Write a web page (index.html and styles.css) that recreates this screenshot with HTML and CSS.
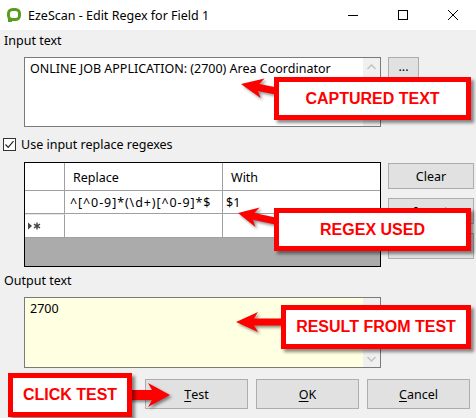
FILE: index.html
```html
<!DOCTYPE html>
<html>
<head>
<meta charset="utf-8">
<link rel="stylesheet" href="styles.css">
</head>
<body>
<div class="window">
  <div class="titlebar">
    <svg class="logo" width="14" height="15" viewBox="0 0 14 15">
      <rect x="1.5" y="1.5" width="11" height="10" rx="4" ry="4" fill="none" stroke="#5a9c1e" stroke-width="3"/>
      <rect x="1" y="10" width="4" height="4" fill="#5a9c1e"/>
    </svg>
    <span class="title">EzeScan - Edit Regex for Field 1</span>
    <div class="controls">
      <svg width="10" height="10" viewBox="0 0 10 10"><line x1="0" y1="5.5" x2="10" y2="5.5" stroke="#000" stroke-width="1"/></svg>
      <svg width="10" height="10" viewBox="0 0 10 10"><rect x="0.5" y="0.5" width="9" height="9" fill="none" stroke="#000" stroke-width="1"/></svg>
      <svg width="10" height="10" viewBox="0 0 10 10"><path d="M0 0 L10 10 M10 0 L0 10" stroke="#000" stroke-width="1"/></svg>
    </div>
  </div>

  <div class="form">
    <div class="label lbl-input">Input text</div>
    <div class="row row-input">
      <div class="textbox input-box">
        <div class="txt">ONLINE JOB APPLICATION: (2700) Area Coordinator</div>
        <div class="vscroll">
          <span class="sb-btn"><svg width="9" height="6" viewBox="0 0 9 6"><path d="M0.5 5 L4.5 1 L8.5 5" fill="none" stroke="#c2c2c2" stroke-width="1.5"/></svg></span>
          <span class="sb-track"></span>
        </div>
      </div>
      <button class="btn btn-dots">...</button>
    </div>

    <div class="check-row">
      <span class="checkbox"><svg width="11" height="11" viewBox="0 0 11 11"><path d="M1.5 5.5 L4.2 8.3 L9.5 2.2" fill="none" stroke="#222" stroke-width="1.2"/></svg></span>
      <span>Use input replace regexes</span>
    </div>

    <div class="row row-grid">
      <div class="grid">
        <div class="grid-row head">
          <div class="cell rh"></div>
          <div class="cell">Replace</div>
          <div class="cell last">With</div>
        </div>
        <div class="grid-row r1">
          <div class="cell rh"></div>
          <div class="cell data regex">^[^0-9]*(\d+)[^0-9]*$</div>
          <div class="cell data last">$1</div>
        </div>
        <div class="grid-row r2">
          <div class="cell rh newrow"><svg width="16" height="8" viewBox="0 0 16 8"><path d="M1 0.5 L5 4 L1 7.5 Z" fill="#444"/><path d="M10 0.5 V7.5 M7 2.2 L13 5.8 M13 2.2 L7 5.8" stroke="#444" stroke-width="1.4"/></svg></div>
          <div class="cell"></div>
          <div class="cell last"></div>
        </div>
        <div class="grid-fill"></div>
      </div>
      <div class="side-btns">
        <button class="btn side">Clear</button>
        <button class="btn side">Insert</button>
        <button class="btn side">Delete</button>
      </div>
    </div>

    <div class="label lbl-output">Output text</div>
    <div class="row row-output">
      <div class="textbox output-box">
        <div class="txt">2700</div>
        <div class="vscroll">
          <span class="sb-track"></span>
          <span class="sb-btn"><svg width="9" height="6" viewBox="0 0 9 6"><path d="M0.5 1 L4.5 5 L8.5 1" fill="none" stroke="#c2c2c2" stroke-width="1.5"/></svg></span>
        </div>
      </div>
    </div>

    <div class="actions">
      <button class="btn action"><u>T</u>est</button>
      <button class="btn action"><u>O</u>K</button>
      <button class="btn action"><u>C</u>ancel</button>
    </div>
  </div>

  <svg class="arrows" width="476" height="418" viewBox="0 0 476 418">
    <g class="arrow" transform="translate(241 84) rotate(11.3)">
      <polygon points="0,0 22,-10 18,-3.5 36,-3.5 36,3.5 18,3.5 22,10"/>
    </g>
    <g class="arrow" transform="translate(238 213) rotate(12)">
      <polygon points="0,0 20,-10 16,-3.5 40,-3.5 40,3.5 16,3.5 20,10"/>
    </g>
    <g class="arrow" transform="translate(236 322)">
      <polygon points="0,0 22,-10 18,-3.5 48,-3.5 48,3.5 18,3.5 22,10"/>
    </g>
    <g class="arrow" transform="translate(170 395) rotate(180)">
      <polygon points="0,0 22,-12 18,-5 42,-5 42,5 18,5 22,12"/>
    </g>
  </svg>

  <div class="callout c-captured">CAPTURED TEXT</div>
  <div class="callout c-regex">REGEX USED</div>
  <div class="callout c-result">RESULT FROM TEST</div>
  <div class="callout c-click">CLICK TEST</div>
</div>
</body>
</html>
```

FILE: styles.css
```css
* { box-sizing: border-box; }

html, body {
  margin: 0;
  padding: 0;
}

body {
  width: 476px;
  height: 418px;
  overflow: hidden;
  background: #f0f0f0;
  font-family: "Noto Sans", "Open Sans", sans-serif;
  font-size: 12.5px;
  color: #000;
}

.window {
  position: relative;
  width: 476px;
  height: 418px;
}

.titlebar {
  height: 30px;
  background: #fff;
  display: flex;
  align-items: center;
}

.logo {
  margin-left: 7px;
  flex: none;
}

.title {
  margin-left: 7px;
  font-size: 12.5px;
  line-height: 15px;
}

.controls {
  margin-left: auto;
  margin-right: 18px;
  display: flex;
  gap: 40px;
  align-items: center;
}

.form {
  display: flex;
  flex-direction: column;
}

.label {
  height: 15px;
  line-height: 15px;
  padding-left: 4px;
}

.lbl-input { margin-top: 3px; }
.lbl-output { margin-top: 6px; }

.row {
  display: flex;
  margin-left: 24px;
  gap: 7px;
  align-items: flex-start;
}

.row-input { margin-top: 9px; }
.row-output { margin-top: 9px; }

.textbox {
  width: 357px;
  border: 1px solid #7a7a7a;
  background: #fff;
  display: flex;
}

.input-box { height: 70px; }
.output-box { height: 71px; background: #ffffe1; }

.txt {
  flex: 1;
  padding: 3px 5px;
  line-height: 15px;
  white-space: nowrap;
  overflow: hidden;
}

.vscroll {
  width: 17px;
  display: flex;
  flex-direction: column;
  background: #f0f0f0;
}

.sb-btn {
  height: 17px;
  display: flex;
  align-items: center;
  justify-content: center;
}

.sb-track { flex: 1; }

.btn {
  font-family: inherit;
  font-size: 12.5px;
  color: #000;
  background: #e1e1e1;
  border: 1px solid #adadad;
  padding: 0;
  margin: 0;
  display: flex;
  align-items: center;
  justify-content: center;
}

.btn-dots {
  width: 31px;
  height: 23px;
  padding-bottom: 4px;
}

.check-row {
  margin-top: 10px;
  height: 15px;
  line-height: 15px;
  display: flex;
  align-items: center;
  padding-left: 3px;
  gap: 5px;
}

.checkbox {
  width: 13px;
  height: 13px;
  border: 1px solid #333;
  background: #fff;
  display: flex;
  align-items: center;
  justify-content: center;
}

.row-grid { margin-top: 10px; }

.grid {
  width: 357px;
  height: 105px;
  border: 1px solid #000;
  background: #ababab;
  display: flex;
  flex-direction: column;
}

.grid-row {
  display: grid;
  grid-template-columns: 40px 158px 1fr;
  background: #fff;
}

.grid-row.head { height: 28px; }
.grid-row.r1 { height: 23px; }
.grid-row.r2 { height: 24px; }

.cell {
  border-right: 1px solid #a0a0a0;
  border-bottom: 1px solid #a0a0a0;
  display: flex;
  align-items: center;
  padding-left: 8px;
  white-space: nowrap;
  overflow: hidden;
}

.cell.last { border-right: none; }
.cell.data { padding-left: 5px; }
.cell.data.last { padding-left: 3px; }
.cell.regex { letter-spacing: 0.9px; }
.head .cell { padding-top: 1px; }
.cell.rh { padding-left: 2px; }
.r2 .cell.rh { border-top: 1px solid #e6e6e6; }

.grid-fill { flex: 1; }

.side-btns {
  display: flex;
  flex-direction: column;
  gap: 9px;
  margin-top: 1px;
}

.btn.side {
  width: 86px;
  height: 26px;
}

.actions {
  margin-top: 11px;
  display: flex;
  justify-content: flex-end;
  gap: 8px;
  padding-right: 6px;
}

.btn.action {
  width: 103px;
  height: 30px;
}

.btn u { text-decoration: underline; text-underline-offset: 2px; }

.arrows {
  position: absolute;
  left: 0;
  top: 0;
  pointer-events: none;
  filter: drop-shadow(2px 2px 1.5px rgba(0,0,0,0.45));
}

.arrow polygon { fill: #ff0000; }

.callout {
  position: absolute;
  background: #fff;
  border: 5px solid #ff0000;
  box-shadow: 3px 3px 3px rgba(0,0,0,0.45);
  color: #ff0000;
  font-family: "Liberation Sans", Arial, sans-serif;
  font-weight: bold;
  font-size: 16px;
  display: flex;
  align-items: center;
  justify-content: center;
  white-space: nowrap;
}

.c-captured { left: 274px; top: 77px; width: 197px; height: 43px; }
.c-regex { left: 274px; top: 208px; width: 197px; height: 43px; }
.c-result { left: 281px; top: 305px; width: 190px; height: 44px; }
.c-click { left: 8px; top: 373px; width: 124px; height: 44px; }
```
